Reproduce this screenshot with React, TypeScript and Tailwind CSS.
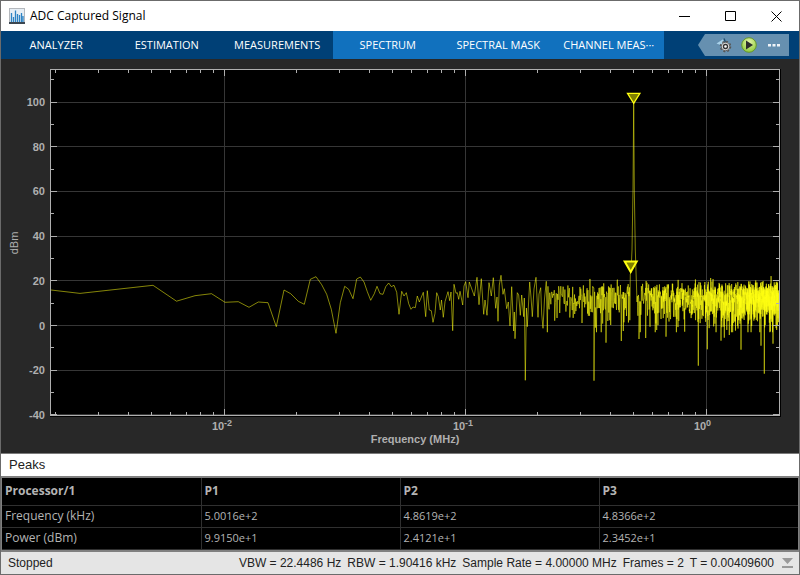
type Point = [number, number]

const PLOT = { left: 50.5, right: 779.5, top: 69.5, bottom: 415.5 }

const xOf = (mhz: number) => 706.3 + 241 * Math.log10(mhz)
const yOf = (dbm: number) => 325.5 - 2.235 * dbm

// low frequency bins, wide apart on the log axis
const LOW_BINS: Point[] = [
    [51, 290], [80, 293.4], [153, 285.3], [176.5, 301.2], [195, 295.7], [211.5, 293.7], [225, 302.3], [238.3, 301.7],
    [249, 307.3], [258.3, 302], [268, 302.7], [276.3, 326.7], [284, 290], [290.7, 293.7], [298.3, 301.3],
    [304.3, 304.3], [310.3, 279.3], [316, 276.7], [321.7, 284.7], [326.7, 294.3], [331.3, 309.3], [336, 333.3],
    [340.3, 302.7], [344.7, 286.3], [348.7, 289.3], [353, 298.7], [356.7, 279], [360.3, 277], [364, 282],
    [367.3, 291.7], [370.7, 300.3], [374.3, 293.7], [377, 286.3], [380, 293.7], [383, 294.3], [385.7, 286.7],
    [388.7, 283], [391.3, 286.7], [394, 285.3], [396.7, 292.3], [399, 314.3], [401.7, 291.3], [404, 296],
    [406.3, 292.7], [408.7, 303.7], [411, 309.3], [413, 307], [415.3, 307.7], [417.3, 296], [419.3, 302],
    [423.3, 292.3], [425.7, 316.7], [427.3, 290.7], [429.3, 310], [431.3, 310.7], [433, 322.3], [435, 313.3],
    [436.7, 292.7], [438.3, 296.7], [440.3, 310], [441.5, 300], [443.3, 317.3], [445, 301.7], [448, 291.7],
    [449.7, 300.7], [451, 292], [452.7, 330.7], [454, 284.3], [456, 293.3], [457.3, 292.7], [458.7, 299.3],
    [460, 291.3], [462.7, 305], [464, 286], [465.7, 281.7], [468, 297.7], [469.3, 282], [474.3, 296], [477, 277.3],
    [479, 304.7], [481.3, 278.7], [483.7, 314.3], [485, 300], [487, 315.3], [489, 282.7], [491.3, 296],
    [493.3, 277.7], [495.7, 308.3], [497, 297], [498, 321.3], [499.3, 285], [501, 275.3], [503, 294.3],
    [504.3, 288.7], [506.7, 308.7], [508.3, 302], [510, 326], [511.7, 286.7], [513.7, 331], [514.3, 312],
    [515, 338.7], [517.3, 292.7], [518.7, 295], [520.3, 315.3], [521.7, 295], [523.7, 316.7], [524.3, 298],
    [525.3, 380.3], [526.4, 308], [527.3, 326.7], [529.7, 282], [531, 297], [532.3, 316.7], [534, 289],
    [536, 277.3], [538, 317.3], [539, 294], [540.7, 287.7], [541.7, 314], [543, 328.3], [544.5, 299], [546.3, 281.3],
]

// deep notches in the noise floor
const NOTCHES: Point[] = [
    [554.7, 320.7], [574.7, 314], [582, 323], [594, 380.7], [606, 342.7], [610.7, 325], [621.3, 341], [623.3, 331],
    [639, 339], [645.7, 338], [650, 326.7], [656.7, 330], [666, 336.7], [684.7, 331.7], [698.3, 365.7],
    [707.3, 349.3], [721, 340.7], [724.3, 337.7], [729.3, 335], [741, 349.7], [761, 345.7], [764.3, 373.7],
    [773, 343.7], [776.7, 330],
]

const CARRIER: Point[] = [
    [630.3, 274], [631, 272], [632, 250], [633, 190], [633.7, 102], [634.3, 190], [635.3, 250], [636.3, 280], [637, 302],
]

function buildTrace(): Point[] {
    const points = [...LOW_BINS]
    let seed = 7
    const random = () => {
        seed = (seed * 16807) % 2147483647
        return seed / 2147483647
    }
    let notch = 0
    let carrierDone = false
    for (let mhz = 0.219; mhz < 2; mhz += 0.00125) {
        const x = xOf(mhz)
        let power = 13.5 + 10 * Math.log10(-Math.log(1 - random() * 0.9993))
        if (power < 7) power = Math.max(7 - (7 - power) * 0.6, -3)
        if (x > 630 && x < 637.3) {
            if (!carrierDone) points.push(...CARRIER)
            carrierDone = true
            continue
        }
        if (notch < NOTCHES.length && x >= NOTCHES[notch][0]) {
            points.push(NOTCHES[notch])
            notch += 1
            continue
        }
        points.push([x, yOf(power)])
    }
    return points
}

const TRACE = buildTrace()

const Y_MAJOR = [100, 80, 60, 40, 20, 0, -20, -40]
const Y_MINOR = [110, 90, 70, 50, 30, 10, -10, -30]
const X_MAJOR = [
    { mhz: 0.01, exp: "-2" },
    { mhz: 0.1, exp: "-1" },
    { mhz: 1, exp: "0" },
]
const X_MINOR = [0.001, 0.01, 0.1, 1]
    .flatMap((decade) => [2, 3, 4, 5, 6, 7, 8, 9].map((n) => n * decade))
    .filter((mhz) => mhz < 1.99)

const snap = (v: number) => Math.floor(v) + 0.5

const SpectrumChart = () => (
    <svg
        viewBox="1 59 798 394"
        className="block w-full h-auto bg-[#282828]"
        fontFamily='"Liberation Sans", Arial, sans-serif'
        fontSize="11"
        fontWeight="bold"
        fill="#afafaf"
        role="img"
        aria-label="Spectrum"
    >
        <rect x="50" y="69" width="731" height="348" fill="#000"/>

        {/* Grid */}
        <g stroke="#363636">
            {Y_MAJOR.map((v) => (
                <line key={v} x1={PLOT.left} x2={PLOT.right} y1={snap(yOf(v))} y2={snap(yOf(v))}/>
            ))}
            {X_MAJOR.map(({ mhz }) => (
                <line key={mhz} x1={snap(xOf(mhz))} x2={snap(xOf(mhz))} y1={PLOT.top} y2={PLOT.bottom}/>
            ))}
        </g>

        {/* Trace, one line per bin so dense areas add up */}
        <g stroke="#ffff11" strokeOpacity="0.52">
            {TRACE.slice(1).map(([x, y], i) => (
                <line key={i} x1={TRACE[i][0]} y1={TRACE[i][1]} x2={x} y2={y}/>
            ))}
        </g>

        {/* Frame and ticks */}
        <g stroke="#afafaf" fill="none">
            <rect x={PLOT.left} y={PLOT.top} width={PLOT.right - PLOT.left} height={PLOT.bottom - PLOT.top}/>
            {Y_MAJOR.map((v) => (
                <path key={v} d={`M50 ${snap(yOf(v))}h7M780 ${snap(yOf(v))}h-7`}/>
            ))}
            {Y_MINOR.map((v) => (
                <path key={v} d={`M50 ${snap(yOf(v))}h4M780 ${snap(yOf(v))}h-4`}/>
            ))}
            {X_MAJOR.map(({ mhz }) => (
                <path key={mhz} d={`M${snap(xOf(mhz))} 69v7M${snap(xOf(mhz))} 416v-7`}/>
            ))}
            {X_MINOR.map((mhz) => (
                <path key={mhz} d={`M${snap(xOf(mhz))} 69v4M${snap(xOf(mhz))} 416v-4`}/>
            ))}
        </g>

        {/* Peak markers */}
        <g fill="#808000" stroke="#ffff11" strokeWidth="1.3">
            <path d="M627.5 93.3h12.4l-6.2 10z"/>
            <path d="M624.7 261.5h12l-6 10.5z" strokeWidth="2"/>
        </g>

        {/* Labels */}
        {Y_MAJOR.map((v) => (
            <text key={v} x="45" y={Math.round(yOf(v)) + 4} textAnchor="end">{v}</text>
        ))}
        {X_MAJOR.map(({ mhz, exp }) => (
            <g key={mhz}>
                <text x={Math.round(xOf(mhz)) - 12} y="430">10</text>
                <text x={Math.round(xOf(mhz))} y="426" fontSize="9">{exp}</text>
            </g>
        ))}
        <text x="415" y="443" textAnchor="middle">Frequency (MHz)</text>
        <text transform="translate(18 243) rotate(-90)" textAnchor="middle" fontWeight="normal">dBm</text>
    </svg>
)

const AppIcon = () => (
    <svg width="16" height="16" viewBox="0 0 16 16" aria-hidden="true">
        <rect x="0.5" y="0.5" width="15" height="15" fill="#e6eef5" stroke="#b4b8bd"/>
        <path d="M0 15h16" stroke="#3c4650" strokeWidth="2"/>
        <path
            d="M2.5 14V5M4.500 14V9M6.500 14V2.500M8.500 14V6M10.500 14V7M12.500 14V5M14 14V8"
            stroke="#2d83c4"
            strokeWidth="1.3"
        />
    </svg>
)

const TitleBar = () => (
    <header className="flex h-[30px] items-center bg-white pl-2 text-xs text-black">
        <AppIcon/>
        <h1 className="ml-[5px] flex-1">ADC Captured Signal</h1>
        <button type="button" aria-label="Minimize" className="flex h-full w-[46px] items-center justify-center">
            <svg width="11" height="11" stroke="#000"><path d="M0 5.5h11"/></svg>
        </button>
        <button type="button" aria-label="Maximize" className="flex h-full w-[46px] items-center justify-center">
            <svg width="11" height="11" stroke="#000" fill="none"><path d="M.5.5h10v9h-10z"/></svg>
        </button>
        <button type="button" aria-label="Close" className="flex h-full w-[46px] items-center justify-center">
            <svg width="11" height="11" stroke="#000"><path d="M.5.5l10 10M10.5.5l-10 10"/></svg>
        </button>
    </header>
)

const QuickAccess = () => (
    <div className="flex h-[22px] w-[91px] items-center gap-2 bg-[#6690b0] pl-[18px] [clip-path:polygon(0_50%,7px_0,100%_0,100%_100%,7px_100%)]">
        <button type="button" aria-label="Settings">
            <svg width="17" height="16" viewBox="0 0 17 16">
                <path d="M.5 6.500L7.500 2v7z" fill="#a9d2ea"/>
                <path d="M8 1.500l1.500 4" stroke="#24506f" strokeWidth="1.500"/>
                <circle cx="9.500" cy="9.500" r="5" fill="none" stroke="#555" strokeWidth="1.500" strokeDasharray="2 1.930"/>
                <circle cx="9.500" cy="9.500" r="4.200" fill="#d6d6d6" stroke="#666"/>
                <circle cx="9.500" cy="9.500" r="2" fill="#fff" stroke="#333" strokeWidth="1.300"/>
            </svg>
        </button>
        <button type="button" aria-label="Run">
            <svg width="16" height="16" viewBox="0 0 16 16">
                <defs>
                    <radialGradient id="run" cx="0.5" cy="0.3" r="0.7">
                        <stop offset="0" stopColor="#e4f5a6"/>
                        <stop offset="1" stopColor="#8fca3b"/>
                    </radialGradient>
                </defs>
                <circle cx="8" cy="8" r="7.3" fill="url(#run)" stroke="#64952f"/>
                <path d="M5 3.5v9L12 8z" fill="#2c2c2c"/>
            </svg>
        </button>
        <button type="button" aria-label="More">
            <svg width="16" height="16" viewBox="0 0 16 16" fill="#f0f4f8">
                <path d="M3 7h3v2.500H3zM7.500 7h3v2.500h-3zM12 7h3v2.500h-3z"/>
            </svg>
        </button>
    </div>
)

const Tab = ({ label }: { label: string }) => (
    <button type="button" role="tab" className="h-full min-w-0 flex-1 text-center whitespace-nowrap">{label}</button>
)

const Toolstrip = () => (
    <nav className="flex h-7 items-center justify-between bg-[#004076] pr-2.5 text-[11px] text-white">
        <div role="tablist" className="flex h-full max-w-[663px] flex-1">
            <div className="flex flex-1">
                <Tab label="ANALYZER"/>
                <Tab label="ESTIMATION"/>
                <Tab label="MEASUREMENTS"/>
            </div>
            <div className="flex flex-1 bg-[#1171be]">
                <Tab label="SPECTRUM"/>
                <Tab label="SPECTRAL MASK"/>
                <Tab label="CHANNEL MEAS···"/>
            </div>
        </div>
        <QuickAccess/>
    </nav>
)

const COLUMNS = ["P1", "P2", "P3"]
const ROWS = [
    { name: "Frequency (kHz)", values: ["5.0016e+2", "4.8619e+2", "4.8366e+2"] },
    { name: "Power (dBm)", values: ["9.9150e+1", "2.4121e+1", "2.3452e+1"] },
]

const PeaksPanel = () => (
    <section className="border-t border-[#7a7a7a]">
        <h2 className="h-[22px] bg-white pl-2 font-[Liberation_Sans,sans-serif] text-[13px] leading-[22px] text-[#222]">Peaks</h2>
        <div className="border-x border-y-2 border-[#808080] bg-black">
            <table className="w-full table-fixed border-collapse text-left text-xs text-[#b4b4b4]">
                <thead>
                    <tr className="h-[27px] border-b border-[#303030]">
                        <th className="px-[3px] font-bold">Processor/1</th>
                        {COLUMNS.map((name) => (
                            <th key={name} className="border-l border-[#303030] px-[3px] font-bold">{name}</th>
                        ))}
                    </tr>
                </thead>
                <tbody>
                    {ROWS.map((row) => (
                        <tr key={row.name} className="h-[22px] border-b border-[#303030]">
                            <td className="px-[3px]">{row.name}</td>
                            {row.values.map((value) => (
                                <td key={value} className="border-l border-[#303030] px-[3px] text-[11px]">{value}</td>
                            ))}
                        </tr>
                    ))}
                </tbody>
            </table>
        </div>
    </section>
)

const STATUS = ["VBW = 22.4486 Hz", "RBW = 1.90416 kHz", "Sample Rate = 4.00000 MHz", "Frames = 2", "T = 0.00409600"]

const StatusBar = () => (
    <footer className="flex h-[22px] items-center bg-[#e5e5e5] pr-[6px] pl-[7px] font-[Liberation_Sans,sans-serif] text-xs text-[#222]">
        <span className="flex-1">Stopped</span>
        <div className="flex gap-1.5 whitespace-nowrap">
            {STATUS.map((item) => <span key={item}>{item}</span>)}
        </div>
        <svg width="11" height="11" className="ml-2" fill="#999" aria-hidden="true">
            <path d="M0 1h11L5.500 7zM0 9h11v2H0z"/>
        </svg>
    </footer>
)

export default function App() {
    return (
        <main className="border border-[#6b6b6b] bg-[#282828] font-[Open_Sans,sans-serif]">
            <TitleBar/>
            <Toolstrip/>
            <SpectrumChart/>
            <PeaksPanel/>
            <StatusBar/>
        </main>
    )
}
